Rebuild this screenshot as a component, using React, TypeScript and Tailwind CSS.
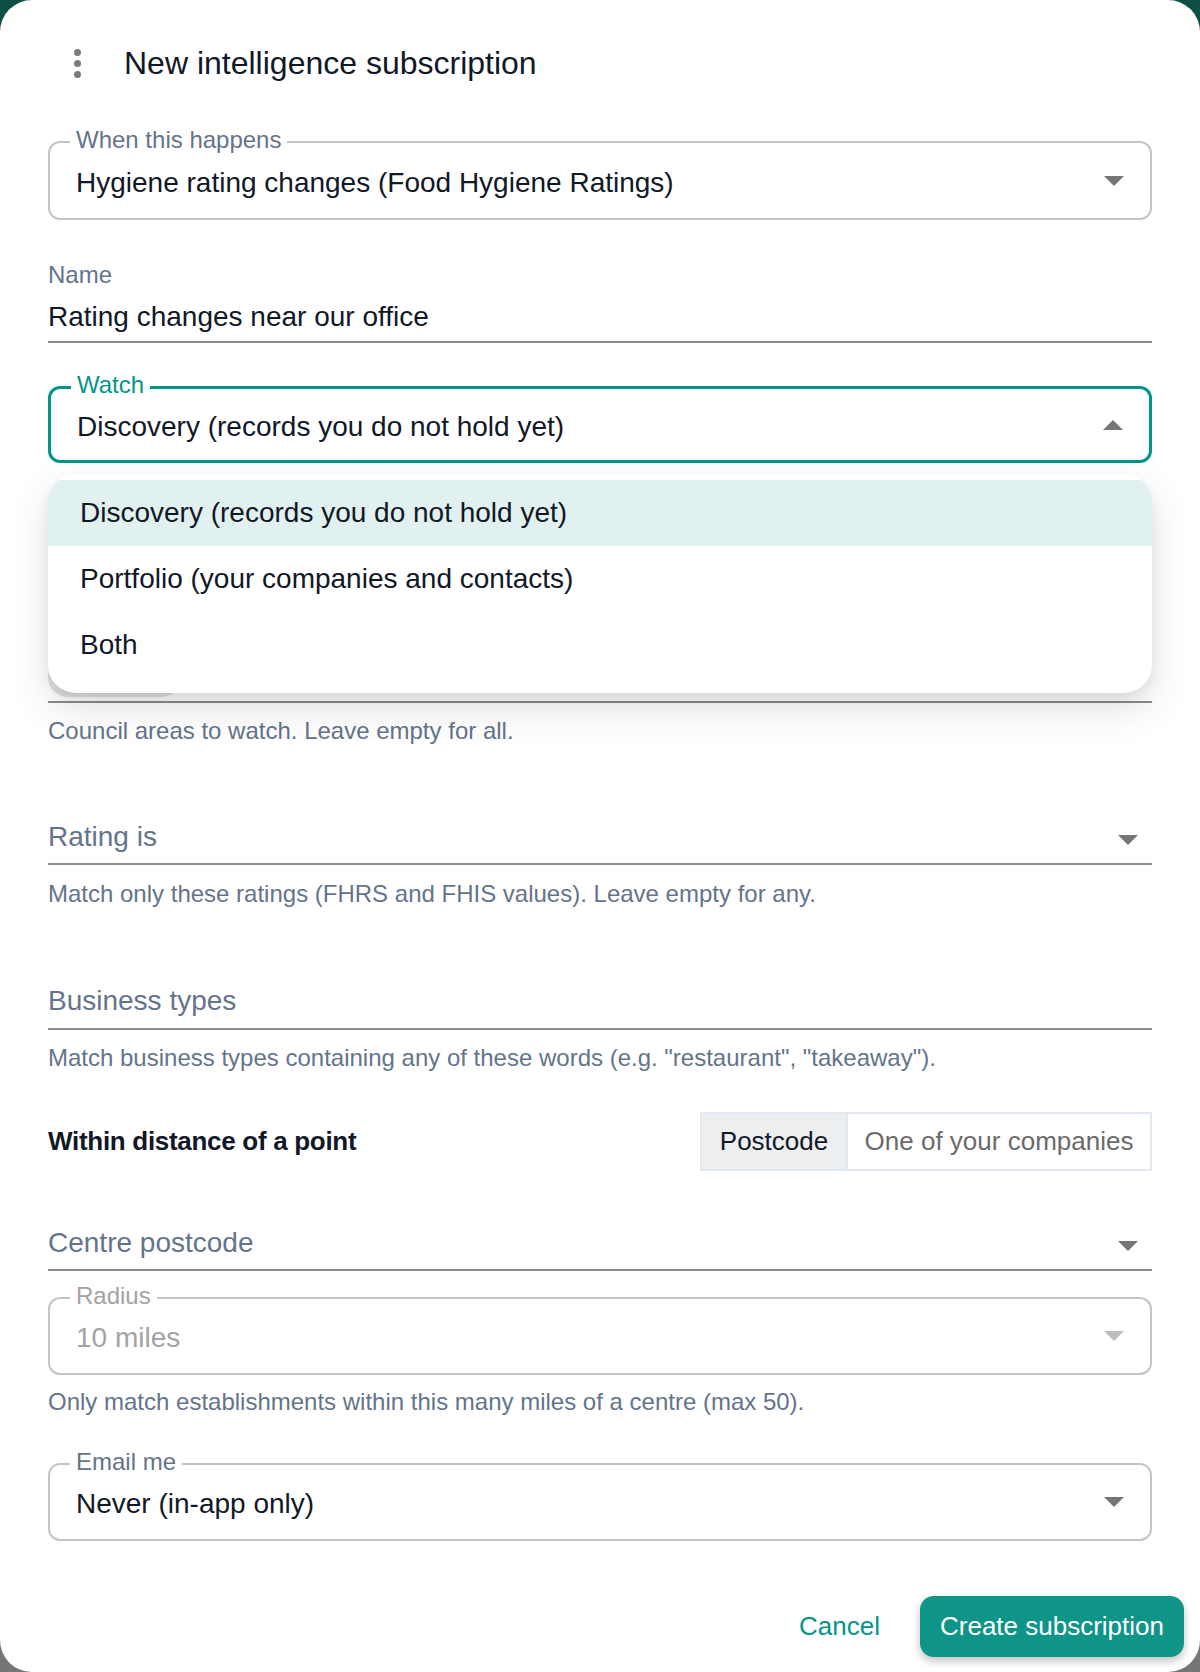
import React from 'react';

const Arrow = ({ up = false, color = '#757575' }: { up?: boolean; color?: string }) => (
  <svg width="20" height="10" viewBox="0 0 20 10" className={up ? 'rotate-180' : ''}>
    <path d="M0 0 L10 10 L20 0 Z" fill={color} />
  </svg>
);

type OutlinedProps = {
  label: string;
  value: string;
  focused?: boolean;
  disabled?: boolean;
  className?: string;
};

const OutlinedSelect: React.FC<OutlinedProps> = ({ label, value, focused, disabled, className = '' }) => {
  const box = focused
    ? 'border-[3px] border-teal-600'
    : 'border-2 border-[#c4c4c4]';
  const labelColor = focused ? 'text-teal-600' : disabled ? 'text-[#a3a3a3]' : 'text-[#64748b]';
  const valueColor = disabled ? 'text-[#a3a3a3]' : 'text-[#111827]';

  return (
    <div className={`relative flex items-center rounded-[12px] ${box} ${className}`}>
      <span
        className={`absolute left-[20px] -translate-y-1/2 bg-white px-[6px] text-[24px] leading-[28px] ${
          focused ? 'top-[-4px]' : 'top-[-3px]'
        } ${labelColor}`}
      >
        {label}
      </span>
      <span className={`flex-1 pl-[26px] pt-[4px] text-[28px] leading-[34px] ${valueColor}`}>{value}</span>
      <span className="pr-[26px]">
        <Arrow up={focused} color={disabled ? '#bdbdbd' : '#757575'} />
      </span>
    </div>
  );
};

const Helper = ({ children, className = '' }: { children: React.ReactNode; className?: string }) => (
  <p className={`text-[24px] leading-[28px] text-[#64748b] ${className}`}>{children}</p>
);

const UnderlineSelect = ({ placeholder, className = '', arrow = true }: { placeholder: string; className?: string; arrow?: boolean }) => (
  <div className={`flex items-center justify-between border-b-2 border-[#8c8c8c] ${className}`}>
    <span className="text-[28px] leading-[34px] text-[#64748b]">{placeholder}</span>
    {arrow && (
      <span className="mt-[6px] pr-[14px]">
        <Arrow />
      </span>
    )}
  </div>
);

const watchOptions = [
  'Discovery (records you do not hold yet)',
  'Portfolio (your companies and contacts)',
  'Both',
];

export default function App() {
  return (
    <div className="min-h-screen bg-linear-to-b from-[#0c4f45] to-[#767676] font-['Liberation_Sans',Arial,sans-serif]">
      <div className="flex min-h-[1672px] flex-col rounded-[32px] bg-white">
        {/* header */}
        <div className="flex h-[126px] items-center pl-[74px]">
          <div className="flex flex-col gap-[4px]">
            <span className="h-[7px] w-[7px] rounded-full bg-[#7b7b7b]" />
            <span className="h-[7px] w-[7px] rounded-full bg-[#7b7b7b]" />
            <span className="h-[7px] w-[7px] rounded-full bg-[#7b7b7b]" />
          </div>
          <h1 className="ml-[43px] text-[32px] leading-[40px] text-[#111827]">New intelligence subscription</h1>
        </div>

        <div className="flex flex-col px-[48px]">
          <OutlinedSelect
            className="mt-[15px] h-[79px]"
            label="When this happens"
            value="Hygiene rating changes (Food Hygiene Ratings)"
          />

          <div className="mt-[41px]">
            <label className="block text-[24px] leading-[28px] text-[#64748b]">Name</label>
            <div className="mt-[11px] border-b-2 border-[#8c8c8c] pb-[7px] text-[28px] leading-[34px] text-[#111827]">
              Rating changes near our office
            </div>
          </div>

          <div className="relative mt-[43px]">
            <OutlinedSelect className="h-[77px]" label="Watch" value="Discovery (records you do not hold yet)" focused />

            {/* council areas field, covered by the open menu */}
            <div className="relative h-[240px] border-b-2 border-[#8c8c8c]">
              <span className="absolute bottom-[4px] left-0 h-[40px] w-[133px] rounded-full bg-[#e2e2e2]" />
            </div>

            <div className="absolute left-0 right-0 top-[88px] z-10 overflow-hidden rounded-[28px] bg-white pb-[15px] pt-[6px] shadow-[0_16px_40px_rgba(0,0,0,0.12),0_6px_12px_rgba(0,0,0,0.06)]">
              {watchOptions.map((opt, i) => (
                <div
                  key={opt}
                  className={`flex h-[66px] items-center pl-[32px] text-[28px] text-[#111827] ${
                    i === 0 ? 'bg-[#e1f1ef]' : ''
                  }`}
                >
                  {opt}
                </div>
              ))}
            </div>
          </div>
          <Helper className="mt-[14px]">Council areas to watch. Leave empty for all.</Helper>

          <UnderlineSelect className="mt-[75px] pb-[9px]" placeholder="Rating is" />
          <Helper className="mt-[15px]">Match only these ratings (FHRS and FHIS values). Leave empty for any.</Helper>

          <UnderlineSelect className="mt-[76px] pb-[10px]" placeholder="Business types" arrow={false} />
          <Helper className="mt-[14px]">
            Match business types containing any of these words (e.g. "restaurant", "takeaway").
          </Helper>

          <div className="mt-[40px] flex h-[59px] items-center justify-between">
            <h2 className="text-[26px] font-bold tracking-[-0.3px] text-[#111827]">Within distance of a point</h2>
            <div className="flex h-full w-[452px] border-2 border-[#e2e8f0]">
              <button className="flex w-[146px] items-center justify-center border-r-2 border-[#e2e8f0] bg-[#eceef0] text-[26px] text-[#111827]">
                Postcode
              </button>
              <button className="flex flex-1 items-center justify-center text-[26px] text-[#6b6b6b]">
                One of your companies
              </button>
            </div>
          </div>

          <UnderlineSelect className="mt-[55px] pb-[9px]" placeholder="Centre postcode" />

          <OutlinedSelect className="mt-[26px] h-[78px]" label="Radius" value="10 miles" disabled />
          <Helper className="mt-[13px]">
            Only match establishments within this many miles of a centre (max 50).
          </Helper>

          <OutlinedSelect className="mt-[47px] h-[78px]" label="Email me" value="Never (in-app only)" />
        </div>

        <div className="mt-[55px] flex items-center justify-end gap-[20px] pr-[16px]">
          <button className="h-[61px] px-[20px] text-[26px] text-teal-600">Cancel</button>
          <button className="h-[61px] rounded-[14px] bg-[#0f9488] px-[20px] text-[26px] text-white shadow-[0_4px_8px_rgba(0,0,0,0.25)]">
            Create subscription
          </button>
        </div>
      </div>
    </div>
  );
}
